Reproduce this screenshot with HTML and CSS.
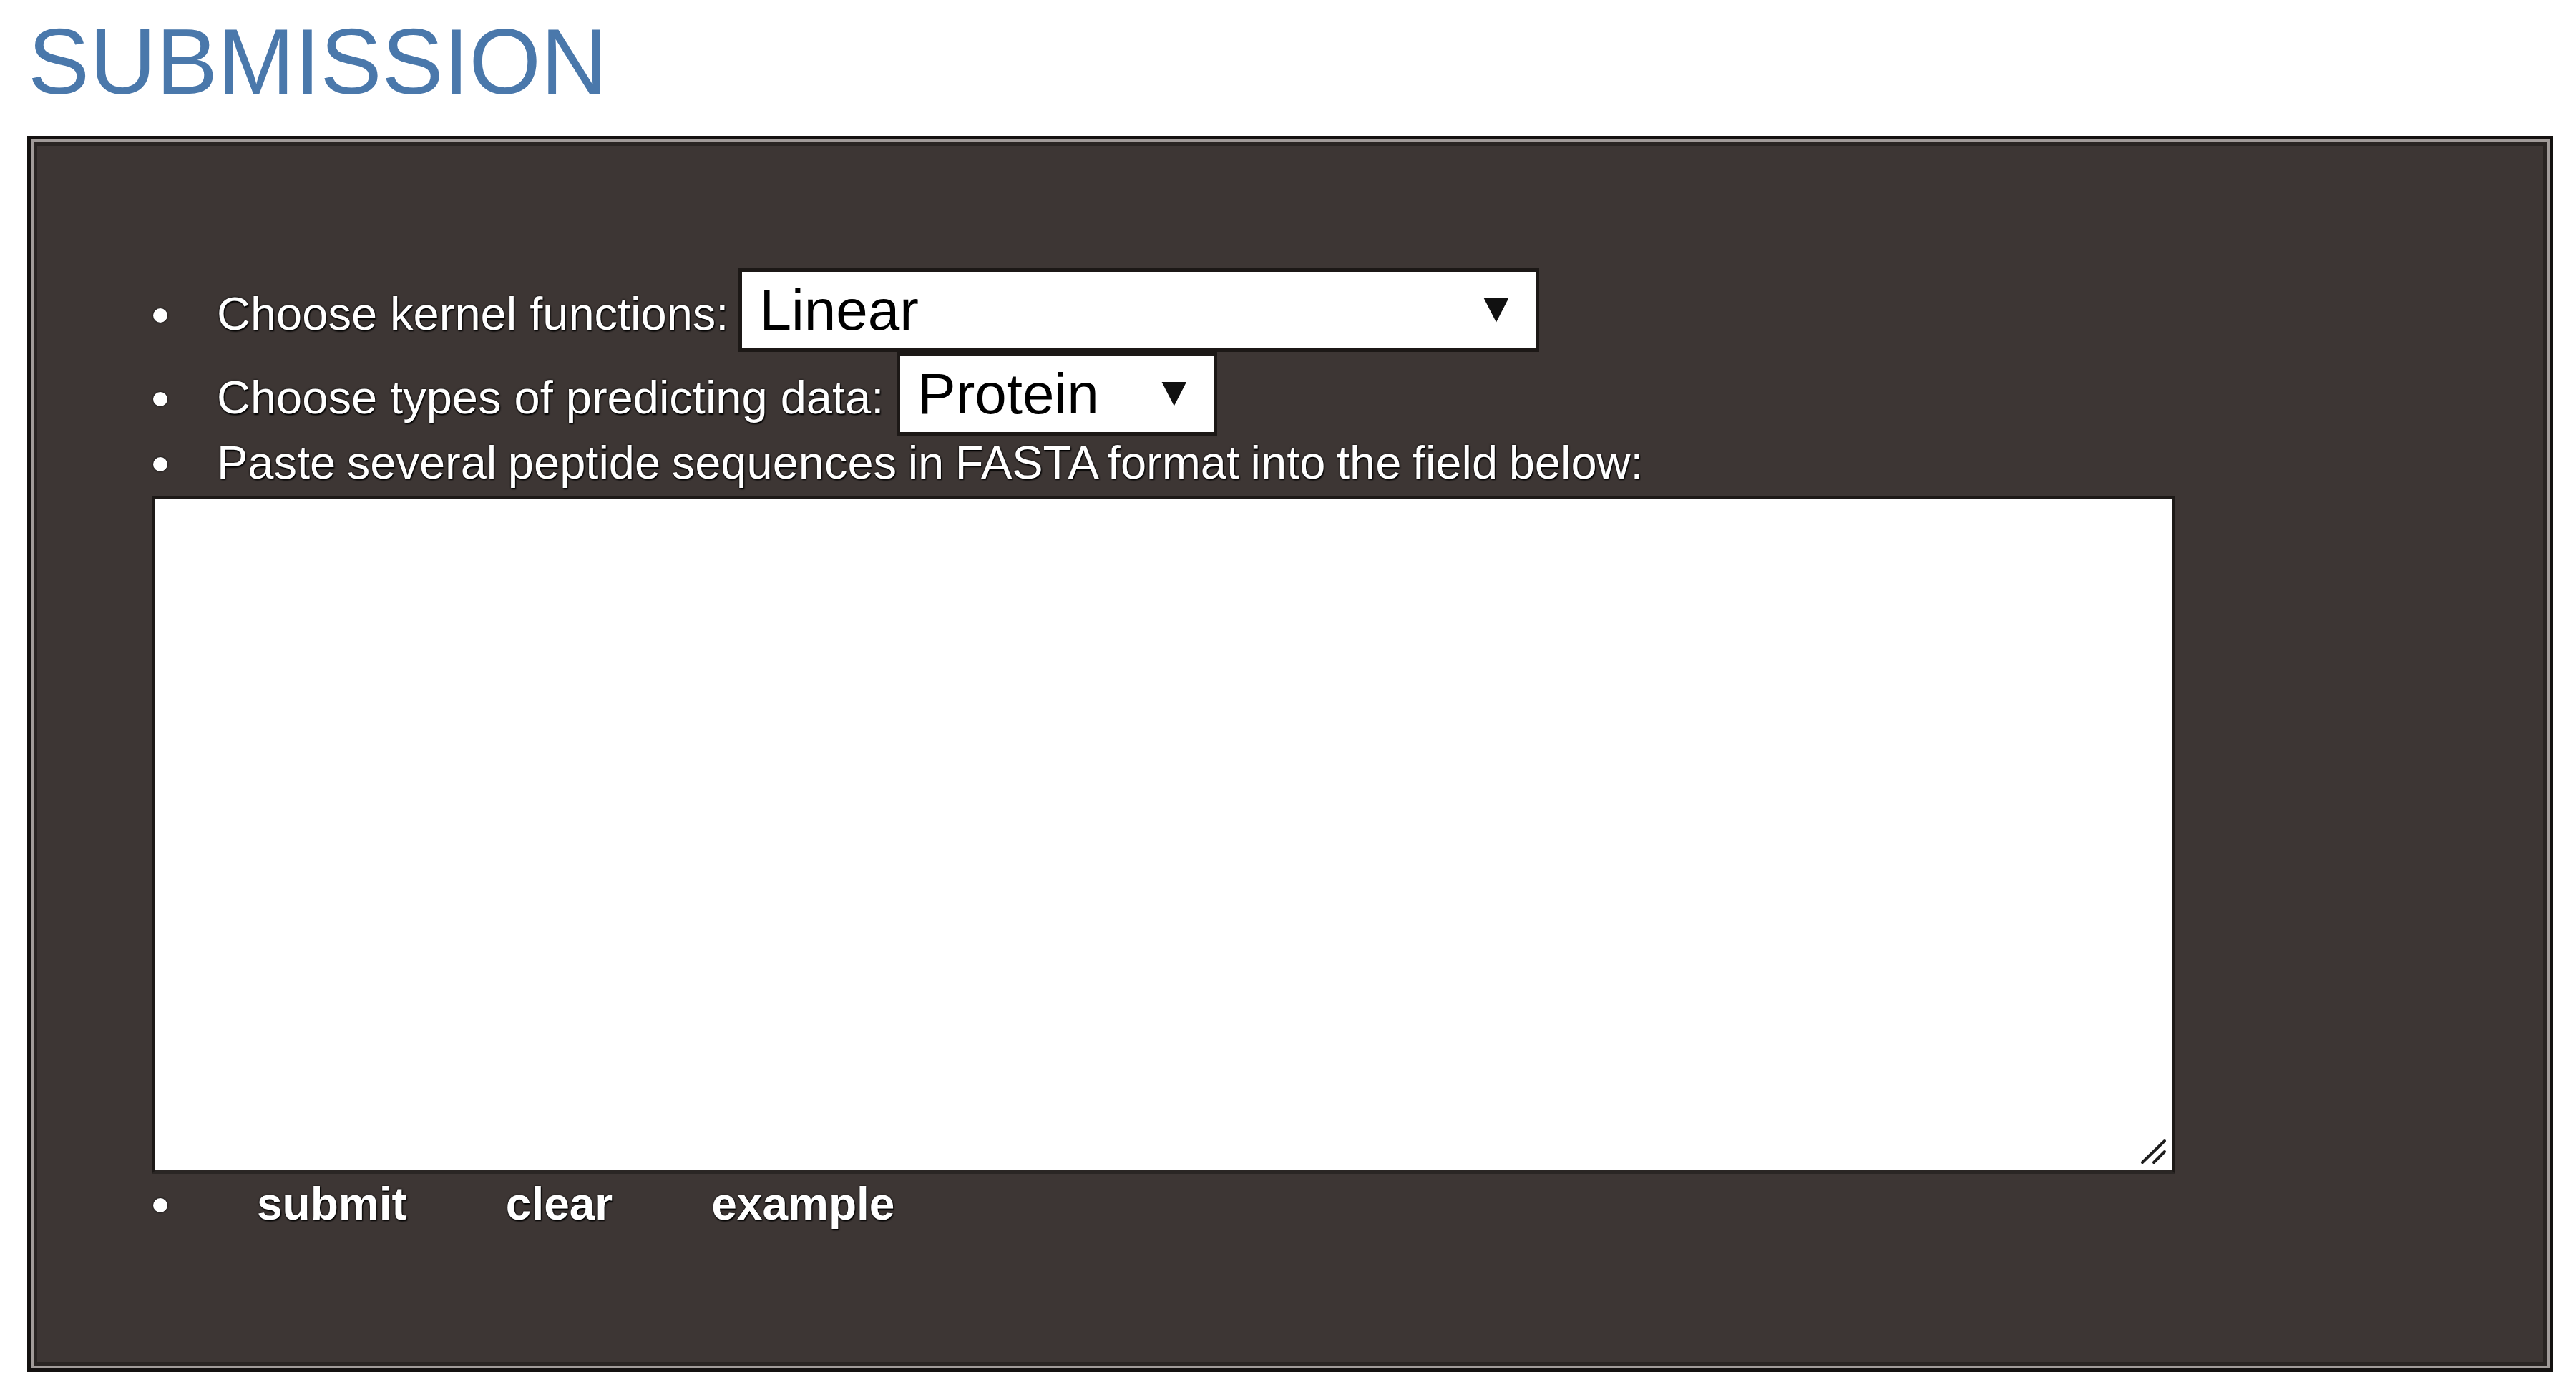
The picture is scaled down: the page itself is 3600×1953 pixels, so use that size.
FILE: index.html
```html
<!DOCTYPE html>
<html lang="en">
<head>
<meta charset="utf-8">
<title>Submission</title>
<link rel="stylesheet" href="styles.css">
</head>
<body>
<div class="page">
  <h1 class="title">SUBMISSION</h1>
  <form class="panel">
    <ul class="opts">
      <li class="opt">Choose kernel functions: <span class="sel sel-kernel"><select class="dd" name="kernel"><option>Linear</option><option>Polynomial</option><option>RBF</option><option>Sigmoid</option></select></span></li>
      <li class="opt">Choose types of predicting data: <span class="sel sel-type"><select class="dd" name="type"><option>Protein</option><option>DNA</option></select></span></li>
      <li class="opt opt-long">Paste several peptide sequences in FASTA format into the field below:</li>
    </ul>
    <div class="ta-wrap">
      <textarea class="seq" name="seq"></textarea>
      <svg class="grip" width="40" height="40" viewBox="0 0 40 40" aria-hidden="true">
        <path d="M6 36 L37 6 M22 36 L37 21" stroke="#1e1e1e" stroke-width="4" stroke-linecap="round" fill="none"/>
      </svg>
    </div>
    <ul class="opts">
      <li class="opt"><span class="btns"><button type="button" class="btn">submit</button><button type="button" class="btn">clear</button><button type="button" class="btn">example</button></span></li>
    </ul>
  </form>
</div>
</body>
</html>
```

FILE: styles.css
```css
html, body {
  margin: 0;
  padding: 0;
  background: #ffffff;
}

body {
  font-family: "Liberation Sans", Arial, sans-serif;
}

.page {
  padding: 22px 0 0 38px;
}

.title {
  margin: 0 0 39px 1px;
  font-size: 129px;
  line-height: 129px;
  font-weight: normal;
  color: #4a78ab;
}

.panel {
  box-sizing: border-box;
  width: 3530px;
  height: 1728px;
  background: #3d3634;
  border: 5px solid #141110;
  box-shadow: inset 0 0 0 4px #a19b99, inset 0 0 0 9px #2a2523;
  color: #ffffff;
  font-size: 65px;
  padding-top: 180px;
}

.opts {
  list-style: none;
  margin: 0;
  padding: 0;
}

.opt {
  padding-left: 171px;
  white-space: nowrap;
  text-shadow: 0 0 3px #000, 1px 2px 2px #000;
}

.opt-long {
  word-spacing: -2.5px;
}

.opt::before {
  content: "";
  display: inline-block;
  width: 20px;
  height: 20px;
  border-radius: 50%;
  background: #ffffff;
  box-shadow: 0 0 3px #000;
  margin-right: 69px;
  vertical-align: 10px;
}

.sel {
  position: relative;
  display: inline-block;
}

.sel-kernel {
  margin-left: -4px;
}

.sel::after {
  content: "";
  position: absolute;
  right: 43px;
  top: 50%;
  width: 35px;
  height: 34px;
  margin-top: -17px;
  background: #111;
  clip-path: polygon(0 0, 100% 0, 50% 100%);
  pointer-events: none;
}

.dd {
  -webkit-appearance: none;
  appearance: none;
  box-sizing: border-box;
  height: 117px;
  margin: 0;
  padding: 0 0 0 24px;
  border: 5px solid #1c1816;
  border-radius: 0;
  background: #ffffff;
  color: #000000;
  font-family: "Liberation Sans", Arial, sans-serif;
  font-size: 80px;
  text-shadow: none;
}

.sel-kernel .dd {
  width: 1119px;
}

.sel-type .dd {
  width: 448px;
}

.ta-wrap {
  position: relative;
  width: 2828px;
  margin: 9px 0 4px 169px;
}

.seq {
  display: block;
  box-sizing: border-box;
  width: 100%;
  height: 948px;
  margin: 0;
  border: 5px solid #1d1917;
  border-bottom-color: #2a2624;
  background: #ffffff;
  resize: none;
}

.grip {
  position: absolute;
  right: 12px;
  bottom: 12px;
  pointer-events: none;
}

.btns {
  display: inline-flex;
  gap: 24px;
}

.btn {
  margin: 0;
  padding: 0 57px;
  border: 0;
  background: transparent;
  color: #ffffff;
  font-family: "Liberation Sans", Arial, sans-serif;
  font-size: 64px;
  font-weight: bold;
  line-height: normal;
  text-shadow: 0 0 3px #000, 1px 2px 2px #000;
  cursor: pointer;
}

.btns .btn:first-child {
  padding-left: 56px;
}
```
